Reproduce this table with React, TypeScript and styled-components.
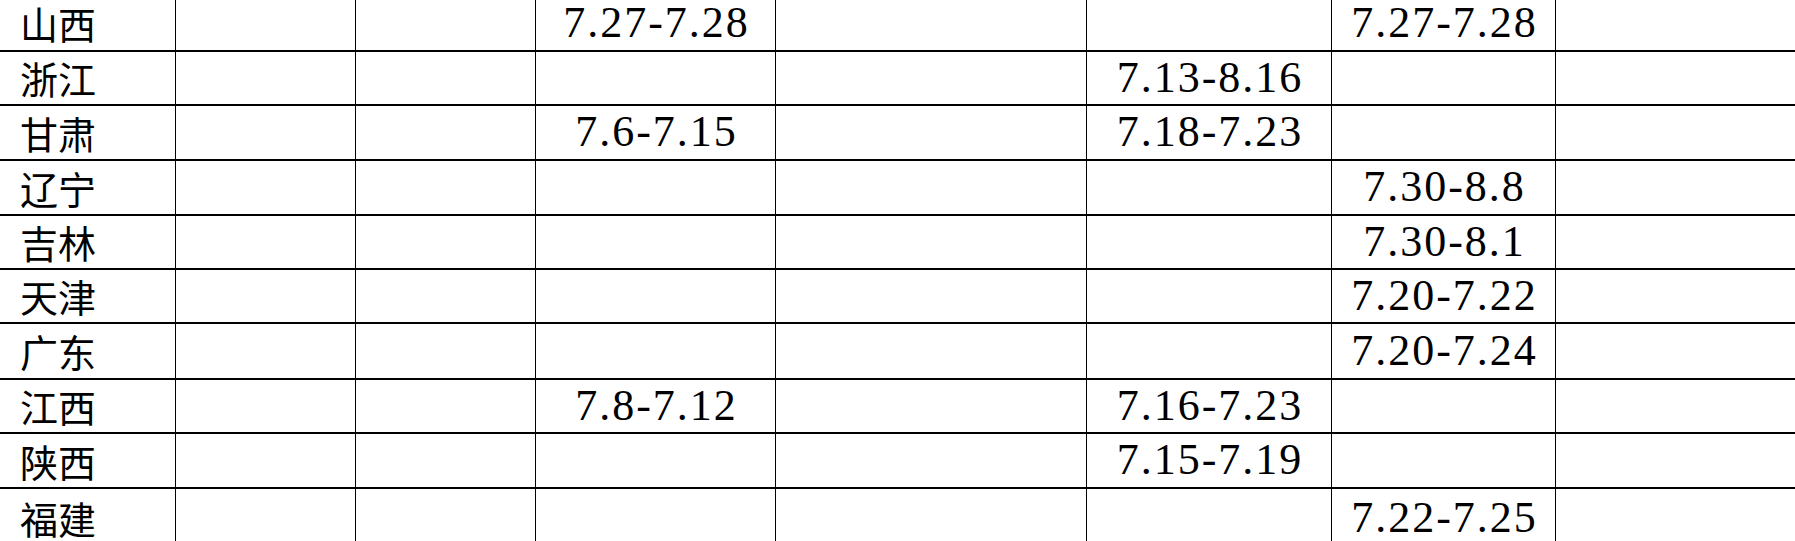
import React from "react";
import styled, { createGlobalStyle } from "styled-components";

const Global = createGlobalStyle`
  * { box-sizing: border-box; }
  html, body { margin: 0; padding: 0; background: #ffffff; overflow: hidden; }
  body { font-family: "Noto Sans CJK SC", "Liberation Serif", serif; color: #000; }
`;

const COLS = "176px 180px 180px 240px 311px 245px 224px 1fr";

const Table = styled.div`
  display: flex;
  flex-direction: column;
  width: 100%;
  margin-top: -4px;
`;

const Row = styled.div<{ $h: number }>`
  display: grid;
  grid-template-columns: ${COLS};
  height: ${(p) => p.$h}px;
  border-bottom: 2px solid #000;
`;

const Cell = styled.div<{ $last?: boolean }>`
  display: flex;
  align-items: center;
  justify-content: center;
  min-width: 0;
  border-right: ${(p) => (p.$last ? "none" : "1px solid #000")};
`;

const NameCell = styled(Cell)`
  justify-content: flex-start;
  padding-left: 20px;
`;

const NameText = styled.span`
  font-family: "Noto Sans CJK SC", sans-serif;
  font-size: 38px;
  line-height: 1.2;
  white-space: nowrap;
`;

const DateText = styled.span`
  font-family: "Liberation Serif", serif;
  font-size: 44px;
  line-height: 1.15;
  letter-spacing: 2px;
  margin-right: -2px;
  white-space: nowrap;
`;

type RowData = { name: string; h: number; dates: Record<number, string> };

const rows: RowData[] = [
  { name: "山西", h: 56, dates: { 3: "7.27-7.28", 6: "7.27-7.28" } },
  { name: "浙江", h: 54, dates: { 5: "7.13-8.16" } },
  { name: "甘肃", h: 55, dates: { 3: "7.6-7.15", 5: "7.18-7.23" } },
  { name: "辽宁", h: 55, dates: { 6: "7.30-8.8" } },
  { name: "吉林", h: 54, dates: { 6: "7.30-8.1" } },
  { name: "天津", h: 54, dates: { 6: "7.20-7.22" } },
  { name: "广东", h: 56, dates: { 6: "7.20-7.24" } },
  { name: "江西", h: 54, dates: { 3: "7.8-7.12", 5: "7.16-7.23" } },
  { name: "陕西", h: 55, dates: { 5: "7.15-7.19" } },
  { name: "福建", h: 60, dates: { 6: "7.22-7.25" } },
];

export default function App() {
  return (
    <>
      <Global />
      <Table>
        {rows.map((r) => (
          <Row key={r.name} $h={r.h}>
            <NameCell>
              <NameText>{r.name}</NameText>
            </NameCell>
            {[1, 2, 3, 4, 5, 6, 7].map((c) => (
              <Cell key={c} $last={c === 7}>
                {r.dates[c] ? <DateText>{r.dates[c]}</DateText> : null}
              </Cell>
            ))}
          </Row>
        ))}
      </Table>
    </>
  );
}
